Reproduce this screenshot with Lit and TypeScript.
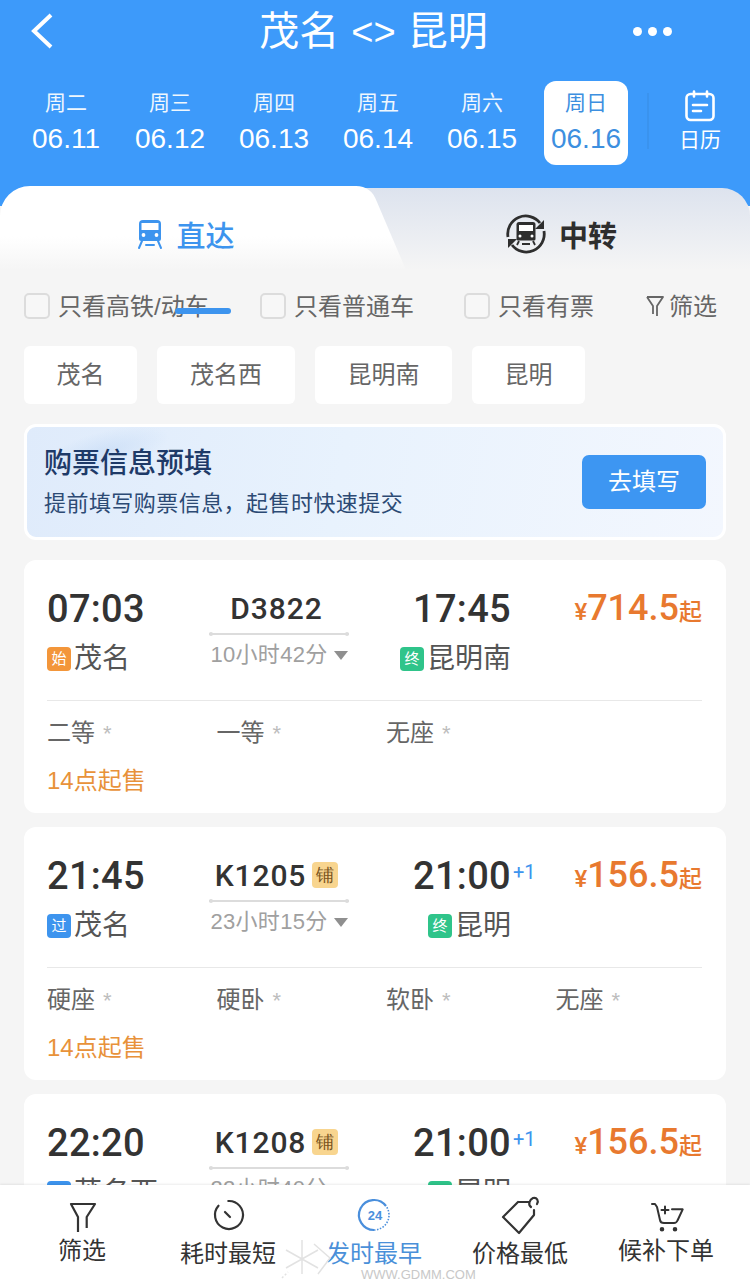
import { LitElement, html, css } from 'lit';
import { customElement } from 'lit/decorators.js';

const days = [
  { w: '周二', d: '06.11' },
  { w: '周三', d: '06.12' },
  { w: '周四', d: '06.13' },
  { w: '周五', d: '06.14' },
  { w: '周六', d: '06.15' },
  { w: '周日', d: '06.16', on: true },
];

const trains = [
  {
    dep: '07:03', from: '茂名', fromTag: '始', fromCls: 'orange', no: 'D3822', pu: false, dur: '10小时42分',
    arr: '17:45', next: false, to: '昆明南', price: '714.5', seats: ['二等', '一等', '无座'],
  },
  {
    dep: '21:45', from: '茂名', fromTag: '过', fromCls: 'blue', no: 'K1205', pu: true, dur: '23小时15分',
    arr: '21:00', next: true, to: '昆明', price: '156.5', seats: ['硬座', '硬卧', '软卧', '无座'],
  },
  // last card runs under the tab bar, its seats are never visible
  {
    dep: '22:20', from: '茂名西', fromTag: '过', fromCls: 'blue', no: 'K1208', pu: true, dur: '22小时40分',
    arr: '21:00', next: true, to: '昆明', price: '156.5', seats: [] as string[],
  },
];

@customElement('app-root')
export class AppRoot extends LitElement {
  static styles = css`
    :host {
      display: block;
      width: 750px;
      height: 1281px;
      overflow: hidden;
      font-family: "Liberation Sans", "Noto Sans CJK SC", sans-serif;
      background: #f5f5f5;
      color: #333;
    }
    .page { position: relative; display: flex; flex-direction: column; width: 750px; height: 1281px; overflow: hidden; }
    .head { background: #3d9afa; height: 206px; flex: none; color: #fff; }
    .top { display: flex; align-items: center; justify-content: space-between; height: 62px; padding: 0 78px 0 30px; }
    .back { width: 24px; height: 36px; }
    .title { font-size: 40px; line-height: 62px; margin-left: 60px; white-space: nowrap; }
    .title span { font-size: 38px; margin: 0 1px; }
    .more { display: flex; gap: 6px; }
    .more i { width: 9px; height: 9px; border-radius: 50%; background: #fff; }
    .dates { display: flex; align-items: flex-start; padding: 19px 0 0 14px; }
    .day { flex: none; width: 104px; height: 84px; display: flex; flex-direction: column; align-items: center; }
    .day .w { font-size: 21px; line-height: 25px; margin-top: 9px; opacity: .92; }
    .day .d { font-size: 28px; line-height: 32px; margin-top: 8px; }
    .day.on .w, .day.on .d { color: #3d8fdf; opacity: 1; }
    .day.on { position: relative; }
    .day.on::before { content: ''; position: absolute; left: 10px; right: 10px; top: 0; bottom: 0; background: #fff; border-radius: 12px; }
    .day.on span { position: relative; }
    .cal { flex: none; margin-left: 9px; width: 104px; display: flex; flex-direction: column; align-items: center; border-left: 2px solid #3a93ee; height: 56px; margin-top: 12px; box-sizing: border-box; }
    .cal svg { width: 32px; height: 32px; margin-top: -3px; flex: none; }
    .cal span { font-size: 21px; line-height: 26px; margin-top: 5px; }

    .tabs { position: relative; flex: none; margin-top: -20px; height: 84px; display: flex; }
    .tab-bg { position: absolute; left: 0; top: 0; width: 750px; height: 84px; }
    .tab { position: relative; flex: none; display: flex; align-items: center; justify-content: center; font-size: 29px; font-weight: 500; height: 96px; }
    .tab.a { width: 372px; gap: 13px; color: #3d94ee; }
    .tab.b { width: 378px; gap: 12px; color: #2e2e2e; font-weight: 700; }
    .tab.a svg { width: 26px; height: 32px; }
    .tab.b svg { width: 42px; height: 42px; }

    .body { flex: 1; min-height: 0; padding: 0 24px; overflow: hidden; }
    .filters { display: flex; align-items: center; height: 44px; margin-top: 12px; font-size: 24px; color: #666; }
    .check { display: flex; align-items: center; gap: 8px; }
    .check i { width: 26px; height: 26px; margin-top: 3px; box-sizing: border-box; border: 2px solid #dcdcdc; border-radius: 5px; background: #f7f7f7; }
    .check.c1 { width: 236px; }
    .check.c2 { width: 204px; }
    .check.c3 { width: 181px; }
    .screen { display: flex; align-items: center; gap: 4px; }
    .screen svg { width: 20px; height: 24px; margin-top: 3px; }
    .bar { position: absolute; left: 175px; top: 308px; width: 56px; height: 6px; border-radius: 3px; background: #3d94ee; }

    .stations { display: flex; gap: 20px; margin-top: 20px; }
    .stn { height: 58px; line-height: 58px; background: #fff; border-radius: 6px; text-align: center; font-size: 24px; color: #666; }

    .promo { position: relative; overflow: hidden; box-sizing: border-box; height: 116px; margin-top: 20px; border: 3px solid #fff; border-radius: 12px; display: flex; align-items: center; justify-content: space-between; padding: 0 17px; background: linear-gradient(100deg, #dfebfb 0%, #e8f2fd 45%, #f3f7fe 100%); }
    .promo::before { content: ''; position: absolute; left: 14px; top: 4px; width: 130px; height: 40px; background: radial-gradient(closest-side, rgba(190, 214, 244, .5), rgba(190, 214, 244, 0)); transform: rotate(-14deg); }
    .promo h3 { position: relative; margin: 0; font-size: 28px; line-height: 36px; color: #1e3a68; font-weight: 500; }
    .promo p { position: relative; margin: 7px 0 0; font-size: 22px; line-height: 30px; color: #2c4a74; letter-spacing: .45px; }
    .fill { width: 124px; height: 54px; line-height: 54px; text-align: center; background: #3d96f2; color: #fff; border-radius: 7px; font-size: 24px; }

    .card { height: 253px; box-sizing: border-box; margin-top: 20px; padding: 0 24px 0 23px; background: #fff; border-radius: 12px; }
    .card + .card { margin-top: 14px; }
    .info { display: grid; grid-template-columns: 162px 140px 162px 192px; height: 141px; border-bottom: 1px solid #e8e8e8; box-sizing: border-box; }
    .time { font-size: 38px; font-weight: 500; line-height: 44px; font-family: Roboto, "Liberation Sans", sans-serif; color: #333; letter-spacing: .3px; }
    .dep, .arr { padding-top: 27px; display: flex; flex-direction: column; }
    .arr { align-items: flex-end; }
    .arr .time { position: relative; }
    .plus { position: absolute; left: 100%; top: 6px; margin-left: 2px; font-size: 20px; line-height: 24px; color: #3d94ee; font-weight: 400; letter-spacing: 0; }
    .place { display: flex; align-items: center; gap: 3px; margin-top: 10px; font-size: 28px; line-height: 36px; color: #555; }
    .tag { width: 24px; height: 24px; border-radius: 4px; color: #fff; font-size: 15px; line-height: 24px; text-align: center; }
    .tag.orange { background: #f3963a; }
    .tag.blue { background: #3d94ee; }
    .tag.green { background: #2fc48a; }
    .mid { padding-top: 29px; display: flex; flex-direction: column; align-items: center; }
    .no { display: flex; align-items: center; gap: 6px; height: 38px; font-size: 30px; font-weight: 500; font-family: Roboto, "Liberation Sans", sans-serif; color: #333; letter-spacing: .9px; padding-right: 5px; }
    .pu { width: 26px; height: 26px; line-height: 26px; border-radius: 4px; background: #f8d58f; color: #7a5420; font-size: 18px; text-align: center; letter-spacing: 0; }
    .line { position: relative; align-self: stretch; height: 2px; background: #dcdcdc; margin-top: 6px; }
    .line::before, .line::after { content: ''; position: absolute; top: -1px; width: 4px; height: 4px; border-radius: 50%; background: #dcdcdc; }
    .line::before { left: 0; }
    .line::after { right: 0; }
    .dur { display: flex; align-items: center; gap: 6px; font-size: 22px; line-height: 28px; color: #a0a0a0; margin-top: 6px; letter-spacing: .3px; }
    .dur i { width: 0; height: 0; border-left: 7px solid transparent; border-right: 7px solid transparent; border-top: 9px solid #8f8f8f; }
    .price { padding-top: 26px; padding-right: 1px; display: flex; justify-content: flex-end; align-items: baseline; line-height: 44px; height: 44px; color: #e8792f; font-size: 36px; font-weight: 500; font-family: Roboto, "Liberation Sans", sans-serif; }
    .price small { font-size: 24px; }
    .price small.qi { font-size: 23px; font-weight: 500; font-family: "Noto Sans CJK SC", sans-serif; }
    .seats { display: grid; grid-template-columns: repeat(4, 169.5px); padding-top: 17px; font-size: 24px; line-height: 30px; color: #666; }
    .seats em { font-style: normal; color: #bdbdbd; margin-left: 8px; font-size: 22px; }
    .sale { margin-top: 17px; font-size: 24px; line-height: 30px; color: #e8923a; }

    .tabbar { position: absolute; left: 0; right: 0; bottom: 0; height: 96px; background: #fff; box-shadow: 0 -1px 2px rgba(0, 0, 0, .08); display: grid; grid-template-columns: repeat(5, 146px); padding-left: 9px; }
    .item { display: flex; flex-direction: column; align-items: center; font-size: 24px; color: #333; }
    .item svg { width: 44px; height: 44px; margin-top: 8px; flex: none; overflow: visible; }
    .item span { line-height: 28px; margin-top: 3px; }
    .item.low span { margin-top: 0; }
    .item.on { color: #4a90d9; }
    .logo { position: absolute; left: 280px; top: 1238px; width: 70px; height: 42px; }
    .mark { position: absolute; left: 361px; top: 1268px; font-size: 13px; line-height: 13px; color: #c8c8c8; }
  `;

  renderCard(t: (typeof trains)[number]) {
    return html`
      <div class="card">
        <div class="info">
          <div class="dep">
            <div class="time">${t.dep}</div>
            <div class="place"><span class="tag ${t.fromCls}">${t.fromTag}</span>${t.from}</div>
          </div>
          <div class="mid">
            <div class="no">${t.no}${t.pu ? html`<span class="pu">铺</span>` : ''}</div>
            <div class="line"></div>
            <div class="dur">${t.dur}<i></i></div>
          </div>
          <div class="arr">
            <div class="time">${t.arr}${t.next ? html`<span class="plus">+1</span>` : ''}</div>
            <div class="place"><span class="tag green">终</span>${t.to}</div>
          </div>
          <div class="price"><small>¥</small>${t.price}<small class="qi">起</small></div>
        </div>
        ${t.seats.length
          ? html`
              <div class="seats">${t.seats.map((s) => html`<div>${s}<em>*</em></div>`)}</div>
              <div class="sale">14点起售</div>
            `
          : ''}
      </div>
    `;
  }

  render() {
    return html`
      <div class="page">
        <div class="head">
          <div class="top">
            <svg class="back" viewBox="0 0 24 36" fill="none" stroke="#fff" stroke-width="4"><path d="M21 2L4 18l17 16"/></svg>
            <div class="title">茂名 <span>&lt;&gt;</span> 昆明</div>
            <div class="more"><i></i><i></i><i></i></div>
          </div>
          <div class="dates">
            ${days.map((x) => html`
              <div class="day ${x.on ? 'on' : ''}">
                <span class="w">${x.w}</span>
                <span class="d">${x.d}</span>
              </div>
            `)}
            <div class="cal">
              <svg viewBox="0 0 32 32" fill="none" stroke="#fff" stroke-width="2.6" stroke-linecap="round">
                <rect x="2.5" y="4" width="27" height="26" rx="4"/>
                <path d="M10 1.5v5M23 1.5v5M9 15h14M9 21h8"/>
              </svg>
              <span>日历</span>
            </div>
          </div>
        </div>

        <div class="tabs">
          <svg class="tab-bg" viewBox="0 0 750 84" preserveAspectRatio="none">
            <defs>
              <linearGradient id="off" x1="0" y1="0" x2="0" y2="1">
                <stop offset="0" stop-color="#dde3ee"/><stop offset="1" stop-color="#f5f5f5"/>
              </linearGradient>
              <linearGradient id="act" x1="0" y1="0" x2="0" y2="1">
                <stop offset=".6" stop-color="#fff"/><stop offset="1" stop-color="#f5f5f5"/>
              </linearGradient>
            </defs>
            <path d="M340 2H722a28 28 0 0 1 28 28V84H340z" fill="url(#off)"/>
            <path d="M0 84V30A30 30 0 0 1 30 0H356c10 0 17 5 21 16L406 84z" fill="url(#act)"/>
          </svg>
          <div class="tab a">
            <svg viewBox="0 0 26 32" fill="none" stroke="#3d94ee" stroke-width="2" stroke-linecap="round">
              <path d="M6 2h14a4 4 0 0 1 4 4v15a2 2 0 0 1-2 2H4a2 2 0 0 1-2-2V6a4 4 0 0 1 4-4z" fill="#3d94ee" stroke="none"/>
              <rect x="4.5" y="5" width="17" height="7" fill="#fff" stroke="none"/>
              <circle cx="6.5" cy="17" r="1.9" fill="#fff" stroke="none"/>
              <circle cx="19.5" cy="17" r="1.9" fill="#fff" stroke="none"/>
              <path d="M5 23l-3 7M21 23l3 7M9 27h8"/>
            </svg>
            直达
          </div>
          <div class="tab b">
            <svg viewBox="0 0 42 42" fill="none" stroke="#2e2e2e" stroke-width="2.8">
              <path d="M3 24A18 18 0 0 1 35 10"/>
              <path d="M39 18A18 18 0 0 1 7 32"/>
              <path d="M39 7v9h-9zM3 35v-9h9z" fill="#2e2e2e" stroke="none"/>
              <path d="M14 9h14a2.5 2.5 0 0 1 2.5 2.5V26a1.5 1.5 0 0 1-1.5 1.5H13a1.5 1.5 0 0 1-1.5-1.5V11.5A2.5 2.5 0 0 1 14 9z" fill="#2e2e2e" stroke="none"/>
              <rect x="14" y="12" width="14" height="6" fill="#fff" stroke="none"/>
              <circle cx="15" cy="23" r="1.5" fill="#fff" stroke="none"/>
              <circle cx="27" cy="23" r="1.5" fill="#fff" stroke="none"/>
              <path d="M14 28l-2 4M28 28l2 4M17 31h8" stroke-width="1.8"/>
            </svg>
            中转
          </div>
        </div>

        <div class="body">
          <div class="filters">
            <label class="check c1"><i></i>只看高铁/动车</label>
            <label class="check c2"><i></i>只看普通车</label>
            <label class="check c3"><i></i>只看有票</label>
            <div class="screen">
              <svg viewBox="0 0 20 24" fill="none" stroke="#666" stroke-width="1.8" stroke-linejoin="round"><path d="M2 3h16l-6 9v10M8 20v-8L2 3"/></svg>
              筛选
            </div>
          </div>
          <div class="stations">
            <div class="stn" style="width:113px">茂名</div>
            <div class="stn" style="width:138px">茂名西</div>
            <div class="stn" style="width:137px">昆明南</div>
            <div class="stn" style="width:113px">昆明</div>
          </div>
          <div class="promo">
            <div>
              <h3>购票信息预填</h3>
              <p>提前填写购票信息，起售时快速提交</p>
            </div>
            <div class="fill">去填写</div>
          </div>
          ${trains.map((t) => this.renderCard(t))}
        </div>

        <div class="bar"></div>

        <div class="tabbar">
          <div class="item low">
            <svg viewBox="0 0 44 44" fill="none" stroke="#333" stroke-width="2.2" stroke-linejoin="round"><path d="M18 39V24L11 11h24l-8.3 13v11"/></svg>
            <span>筛选</span>
          </div>
          <div class="item">
            <svg viewBox="0 0 44 44" fill="none" stroke="#333" stroke-width="2.2" stroke-linecap="round"><path d="M22.3 8A14 14 0 1 1 12.5 12.7"/><path d="M19 19l5 5"/></svg>
            <span>耗时最短</span>
          </div>
          <div class="item on">
            <svg viewBox="0 0 44 44" fill="none" stroke="#4a8fdc" stroke-width="2.2">
              <path d="M34 13A15 15 0 1 0 22 37"/>
              <path d="M22 37A15 15 0 0 0 34 13" stroke-width="1.6" stroke-dasharray="1.5 1.5"/>
              <text x="23" y="27" text-anchor="middle" font-size="13" font-weight="700" fill="#4a8fdc" stroke="none" font-family="Liberation Sans">24</text>
            </svg>
            <span>发时最早</span>
          </div>
          <div class="item">
            <svg viewBox="0 0 44 44" fill="none" stroke="#333" stroke-width="2.2" stroke-linejoin="round" stroke-linecap="round"><path d="M20 9h11M36 17v5L21 40 5 24 20 9"/><path d="M33 14c-3-2-2-7 2-9 4-1 6 3 4 6"/></svg>
            <span>价格最低</span>
          </div>
          <div class="item low">
            <svg viewBox="0 0 44 44" fill="none" stroke="#333" stroke-width="2" stroke-linecap="round" stroke-linejoin="round"><path d="M8 11h3l2 3 3 13q.5 3 4 3h10q2.5 0 3.5-2.5L38.7 16.3H28"/><path d="M21 13.5v7M17.5 17h7"/><circle cx="18" cy="36.3" r="1.3" fill="#333"/><circle cx="31" cy="36.3" r="1.3" fill="#333"/></svg>
            <span>候补下单</span>
          </div>
        </div>
        <svg class="logo" viewBox="0 0 70 42" fill="none" stroke="#e2e2e2" stroke-width="1.5">
          <path d="M22 2v34M6 12l32 18M38 12L6 30M34 6l16 14-12 16"/>
          <path d="M2 40l6-6" stroke-dasharray="2 2"/>
        </svg>
        <div class="mark">WWW.GDMM.COM</div>
      </div>
    `;
  }
}
